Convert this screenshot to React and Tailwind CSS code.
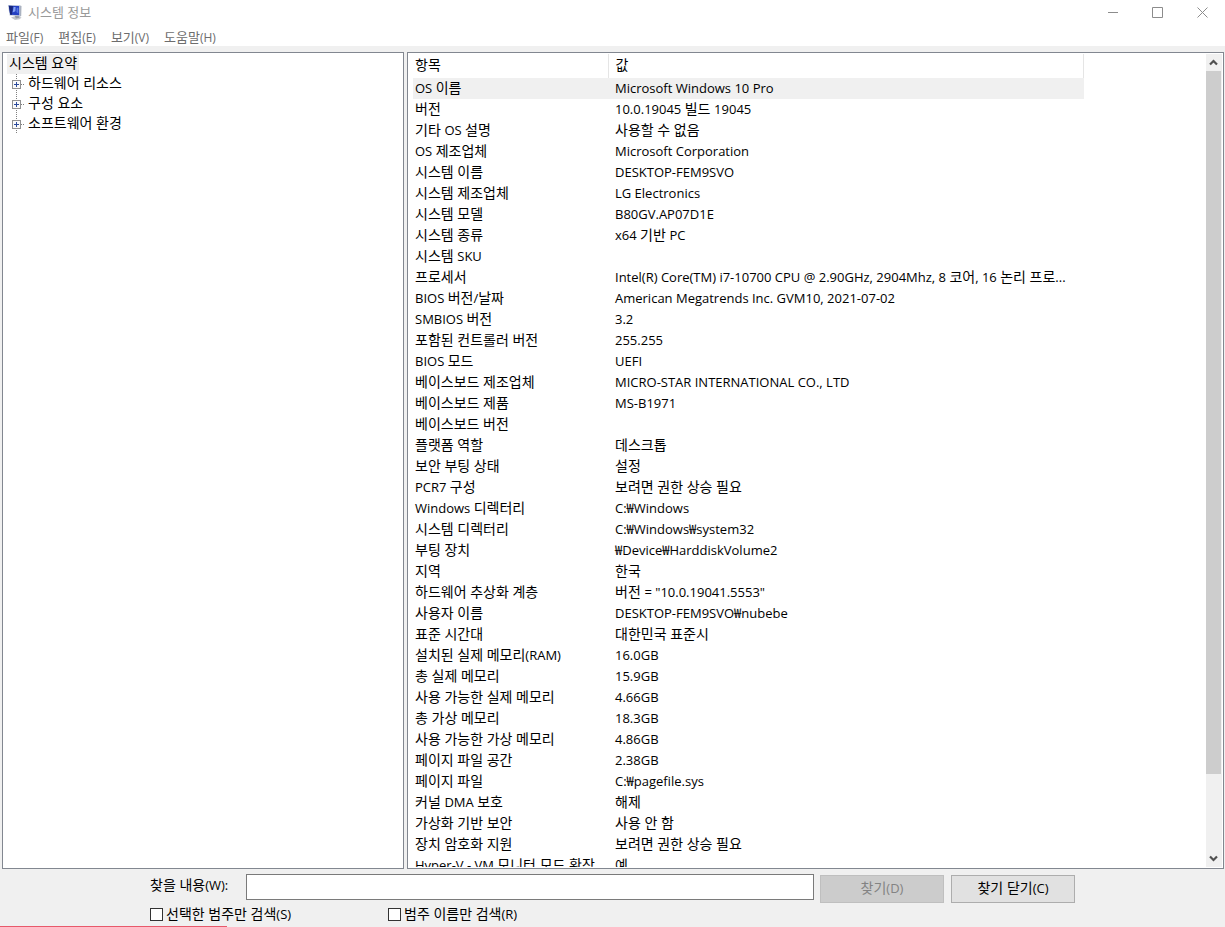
import React from 'react';

const ROWS = [
  ['OS 이름', 'Microsoft Windows 10 Pro'],
  ['버전', '10.0.19045 빌드 19045'],
  ['기타 OS 설명', '사용할 수 없음'],
  ['OS 제조업체', 'Microsoft Corporation'],
  ['시스템 이름', 'DESKTOP-FEM9SVO'],
  ['시스템 제조업체', 'LG Electronics'],
  ['시스템 모델', 'B80GV.AP07D1E'],
  ['시스템 종류', 'x64 기반 PC'],
  ['시스템 SKU', ''],
  ['프로세서', 'Intel(R) Core(TM) i7-10700 CPU @ 2.90GHz, 2904Mhz, 8 코어, 16 논리 프로...'],
  ['BIOS 버전/날짜', 'American Megatrends Inc. GVM10, 2021-07-02'],
  ['SMBIOS 버전', '3.2'],
  ['포함된 컨트롤러 버전', '255.255'],
  ['BIOS 모드', 'UEFI'],
  ['베이스보드 제조업체', 'MICRO-STAR INTERNATIONAL CO., LTD'],
  ['베이스보드 제품', 'MS-B1971'],
  ['베이스보드 버전', ''],
  ['플랫폼 역할', '데스크톱'],
  ['보안 부팅 상태', '설정'],
  ['PCR7 구성', '보려면 권한 상승 필요'],
  ['Windows 디렉터리', 'C:₩Windows'],
  ['시스템 디렉터리', 'C:₩Windows₩system32'],
  ['부팅 장치', '₩Device₩HarddiskVolume2'],
  ['지역', '한국'],
  ['하드웨어 추상화 계층', '버전 = "10.0.19041.5553"'],
  ['사용자 이름', 'DESKTOP-FEM9SVO₩nubebe'],
  ['표준 시간대', '대한민국 표준시'],
  ['설치된 실제 메모리(RAM)', '16.0GB'],
  ['총 실제 메모리', '15.9GB'],
  ['사용 가능한 실제 메모리', '4.66GB'],
  ['총 가상 메모리', '18.3GB'],
  ['사용 가능한 가상 메모리', '4.86GB'],
  ['페이지 파일 공간', '2.38GB'],
  ['페이지 파일', 'C:₩pagefile.sys'],
  ['커널 DMA 보호', '해제'],
  ['가상화 기반 보안', '사용 안 함'],
  ['장치 암호화 지원', '보려면 권한 상승 필요'],
  ['Hyper-V - VM 모니터 모드 확장', '예'],
];

const TREE = ['하드웨어 리소스', '구성 요소', '소프트웨어 환경'];
const MENUS = ['파일(F)', '편집(E)', '보기(V)', '도움말(H)'];

/* Hangul runs are set one step larger than the Latin runs beside them. */
function Label({ children, hangul = 'text-[14px]' }) {
  return children
    .split(/([\uAC00-\uD7A3][\uAC00-\uD7A3 ]*)/)
    .filter(Boolean)
    .map((run, i) =>
      /[\uAC00-\uD7A3]/.test(run) ? (
        <span key={i} className={hangul}>{run}</span>
      ) : (
        run
      ),
    );
}

function AppIcon() {
  return (
    <svg className="h-4 w-4 shrink-0" viewBox="0 0 16 16" aria-hidden="true">
      <path d="M4 13.600 9 11.800 14.600 13.400 12.600 15.200 8 15.900z" fill="#c3c7cc" />
      <path d="M7.600 11l4-.5.8 3.200-3.600.8z" fill="#959ba4" />
      <path d="M12.500 1.200l2 .8-.3 10-2.200 1z" fill="#aab2c0" />
      <path d="M.9 1 13 1.200 13 12.300 2.600 11.600z" fill="#c5cddd" />
      <path d="M1.800 1.800 12.200 2.100 12.200 11.300 3.200 10.700z" fill="#2440c2" />
      <path d="M1.800 1.800 6 1.900 5 10.800 3.200 10.700z" fill="#17277f" />
      <path d="M6.600 2.900 8.600 2.900 8.400 7.200 5.600 8.600z" fill="#86a3f2" />
      <path d="M9.800 3.400 11.300 4 11.300 9.400 9.400 8z" fill="#5273e4" />
    </svg>
  );
}

function Expander() {
  return (
    <svg className="h-5 w-[19px] shrink-0" viewBox="0 0 19 20" shapeRendering="crispEdges" aria-hidden="true">
      <path d="M9.500 0V20" stroke="#808080" strokeDasharray="1 1" />
      <path d="M14 10.500H18" stroke="#808080" strokeDasharray="1 1" />
      <rect x="5.500" y="6.500" width="8" height="8" rx="1" fill="#fafafa" stroke="#919191" />
      <path d="M7 10.500H12M9.500 8V13" stroke="#2b4a9b" />
    </svg>
  );
}

function ScrollArrow({ down }) {
  return (
    <button type="button" aria-label={down ? '아래로' : '위로'} className="flex h-[17px] w-[15px] shrink-0 items-center justify-center">
      <svg className="h-[9px] w-[9px]" viewBox="0 0 9 9" fill="none" stroke="#505050" strokeWidth="2.200" aria-hidden="true">
        <path d={down ? 'M1 2.500 4.500 6 8 2.500' : 'M1 6.500 4.500 3 8 6.500'} />
      </svg>
    </button>
  );
}

function CaptionButton({ label, children }) {
  return (
    <button type="button" aria-label={label} className="flex h-6 w-[45px] items-center justify-center">
      <svg className="h-[11px] w-[11px]" viewBox="0 0 11 11" fill="none" stroke="#8c8c8c" aria-hidden="true">
        {children}
      </svg>
    </button>
  );
}

function SearchOption({ children }) {
  return (
    <label className="flex w-[238px] items-start gap-[3px]">
      <input type="checkbox" className="mt-[3px] h-[13px] w-[13px] appearance-none border border-[#333] bg-white checked:bg-[#333]" />
      <span className="whitespace-nowrap leading-[18px]"><Label>{children}</Label></span>
    </label>
  );
}

export default function App() {
  return (
    <div className="relative flex h-screen flex-col overflow-hidden bg-[#f0f0f0] font-['Open_Sans','Noto_Sans_CJK_KR',sans-serif] text-[13px] leading-5 text-black">
      <header className="bg-white">
        <div className="flex h-6 items-center justify-between pl-[7px]">
          <div className="flex items-center gap-[5px]">
            <AppIcon />
            <h1 className="text-[13px] text-[#999]">시스템 정보</h1>
          </div>
          <div className="flex">
            <CaptionButton label="최소화"><path d="M1 5.500H11" /></CaptionButton>
            <CaptionButton label="최대화"><path d="M.5.5H10.500V10.500H.5z" /></CaptionButton>
            <CaptionButton label="닫기"><path d="M.5.5 10.500 10.500M10.500.5.5 10.500" /></CaptionButton>
          </div>
        </div>
        <nav className="flex h-[22px] items-center gap-[15px] pl-1.5 pt-1 text-[12px] text-[#6d6d6d]">
          {MENUS.map((m) => (
            <button key={m} type="button" className="whitespace-nowrap">
              <Label hangul="text-[13px]">{m}</Label>
            </button>
          ))}
        </nav>
      </header>

      <main className="flex min-h-0 flex-1 gap-[3px] pl-0.5 pr-px pt-1.5">
        <section className="w-[402px] shrink-0 border border-[#828790] bg-white pl-1 pt-px leading-[18px]">
          <button type="button" className="flex h-5 items-start bg-[#f0f0f0] px-0.5"><span><Label>시스템 요약</Label></span></button>
          <ul>
            {TREE.map((t) => (
              <li key={t} className="flex h-5 items-start">
                <Expander />
                <button type="button" className="px-0.5"><Label>{t}</Label></button>
              </li>
            ))}
          </ul>
        </section>

        <section className="flex min-w-0 flex-1 border border-[#828790] bg-white p-px">
          <div className="min-w-0 flex-1 overflow-hidden pl-1">
            <table className="w-[671px] table-fixed border-collapse text-left leading-[18px]">
              <thead>
                <tr className="h-6">
                  <th className="w-[195px] border-r border-[#e5e5e5] p-0 pb-0.5 pl-0.5 font-normal"><Label>항목</Label></th>
                  <th className="border-r border-[#e5e5e5] p-0 pb-0.5 pl-[7px] font-normal"><Label>값</Label></th>
                </tr>
              </thead>
              <tbody>
                {ROWS.map(([name, value], i) => (
                  <tr key={name} className={i === 0 ? 'h-[21px] bg-[#f0f0f0]' : 'h-[21px]'}>
                    <td className="whitespace-nowrap p-0 pb-px pl-0.5"><Label>{name}</Label></td>
                    <td className="whitespace-nowrap p-0 pb-px pl-[7px]"><Label>{value}</Label></td>
                  </tr>
                ))}
              </tbody>
            </table>
          </div>
          <div className="flex w-4 shrink-0 flex-col bg-[#f0f0f0]">
            <ScrollArrow />
            <div className="flex min-h-0 flex-1 flex-col">
              <div className="w-[15px] grow-[37] bg-[#cdcdcd]" />
              <div className="grow-[4]" />
            </div>
            <ScrollArrow down />
          </div>
        </section>
      </main>

      <form className="pb-0.5 pl-[150px] pt-[5px]" onSubmit={(e) => e.preventDefault()}>
        <div className="flex items-start">
          <label htmlFor="find" className="w-24 whitespace-nowrap leading-[22px]"><Label>찾을 내용(W):</Label></label>
          <input id="find" type="text" className="h-[26px] w-[568px] border border-[#7a7a7a] bg-white px-1 outline-none" />
          <button type="submit" disabled className="ml-1.5 mt-px h-7 w-[124px] border border-[#bfbfbf] bg-[#ccc] pb-0.5 text-[#838383]"><Label>찾기(D)</Label></button>
          <button type="button" className="ml-[7px] mt-px h-7 w-[124px] border border-[#adadad] bg-[#e1e1e1] pb-0.5"><Label>찾기 닫기(C)</Label></button>
        </div>
        <div className="mt-0.5 flex h-5">
          <SearchOption>선택한 범주만 검색(S)</SearchOption>
          <SearchOption>범주 이름만 검색(R)</SearchOption>
        </div>
      </form>
      <div className="absolute bottom-0 left-0 h-px w-[227px] bg-[#e8596b]" />
    </div>
  );
}
